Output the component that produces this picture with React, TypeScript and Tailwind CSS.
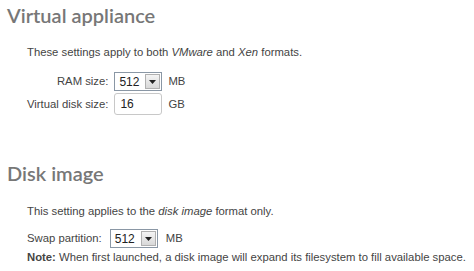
import React from "react";

function Select({ value }: { value: string }) {
  return (
    <div className="flex h-[19px] w-[48px] items-stretch border border-[#8a97a5] bg-white">
      <div className="flex flex-1 items-center pl-[4px] text-[12px] text-[#222]">{value}</div>
      <div className="m-[1px] flex w-[15px] items-center justify-center border border-[#b0b0b0] bg-gradient-to-b from-[#f4f4f4] to-[#d8d8d8]">
        <svg width="7" height="4" viewBox="0 0 7 4"><path d="M0 0h7L3.5 4z" fill="#222" /></svg>
      </div>
    </div>
  );
}

export default function App() {
  const body = { fontFamily: "Tahoma, 'Liberation Sans', Arial, sans-serif" } as React.CSSProperties;
  const head = { fontFamily: "Lato, 'Open Sans', sans-serif" } as React.CSSProperties;
  return (
    <div className="h-[271px] w-[474px] overflow-hidden bg-white text-[11.3px] text-[#444]" style={body}>
      <h1 className="pl-[7px] pt-[3px] text-[20px] font-semibold leading-[24px] text-[#777]" style={head}>
        Virtual appliance
      </h1>
      <p className="mt-[18px] pl-[27px] leading-[14px]">
        These settings apply to both <i>VMware</i> and <i>Xen</i> formats.
      </p>
      <div className="mt-[13px] grid grid-cols-[auto_auto_auto] items-center justify-start gap-x-[6px] gap-y-[2px] pl-[27px]">
        <span className="text-right">RAM size:</span>
        <Select value="512" />
        <span>MB</span>
        <span className="text-right">Virtual disk size:</span>
        <div className="flex h-[22px] w-[48px] items-center rounded-[3px] border border-[#c8c8c8] pl-[5px] text-[12px] text-[#222]">16</div>
        <span>GB</span>
      </div>
      <h1 className="mt-[46px] pl-[7px] text-[20px] font-semibold leading-[24px] text-[#777]" style={head}>
        Disk image
      </h1>
      <p className="mt-[19px] pl-[27px] leading-[14px]">
        This setting applies to the <i>disk image</i> format only.
      </p>
      <div className="mt-[11px] flex items-center gap-[8px] pl-[27px]">
        <span>Swap partition:</span>
        <Select value="512" />
        <span>MB</span>
      </div>
      <p className="mt-[2px] pl-[27px] leading-[14px]">
        <b>Note:</b> When first launched, a disk image will expand its filesystem to fill available space.
      </p>
    </div>
  );
}
